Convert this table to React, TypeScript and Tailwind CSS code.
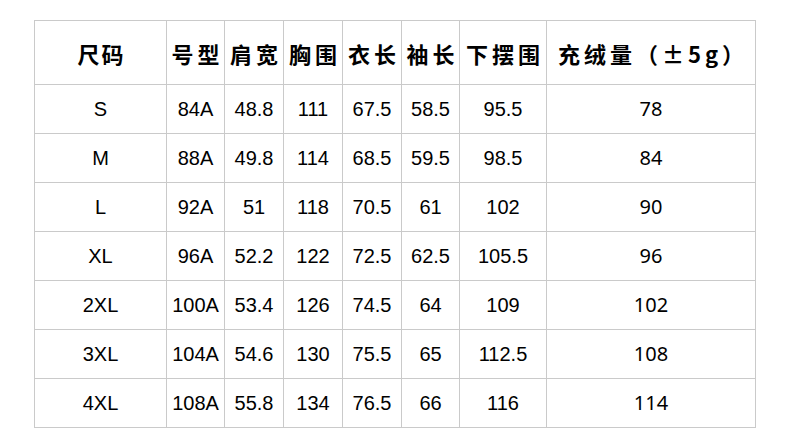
import React from "react";

const headers = ["尺码", "号型", "肩宽", "胸围", "衣长", "袖长", "下摆围", "充绒量（±5g）"];
const rows = [
  ["S", "84A", "48.8", "111", "67.5", "58.5", "95.5", "78"],
  ["M", "88A", "49.8", "114", "68.5", "59.5", "98.5", "84"],
  ["L", "92A", "51", "118", "70.5", "61", "102", "90"],
  ["XL", "96A", "52.2", "122", "72.5", "62.5", "105.5", "96"],
  ["2XL", "100A", "53.4", "126", "74.5", "64", "109", "102"],
  ["3XL", "104A", "54.6", "130", "75.5", "65", "112.5", "108"],
  ["4XL", "108A", "55.8", "134", "76.5", "66", "116", "114"],
];

export default function App() {
  return (
    <div className="w-[790px] h-[428px] bg-white pt-[20px] pl-[34px] overflow-hidden">
      <div className="w-[722px] bg-[#cacaca] p-px grid grid-cols-[131px_57px_58px_58px_58px_57px_86px_208px] grid-rows-[63px_repeat(7,48px)] gap-px">
        {headers.map((h, i) => (
          <div
            key={h}
            className={`bg-white flex items-center justify-center font-bold text-[22px] text-black pt-[1px] whitespace-nowrap ${i === 0 ? "tracking-[2px]" : "tracking-[4px]"}`}
            style={{ fontFamily: '"Noto Sans CJK SC", "Noto Sans", sans-serif' }}
          >
            <span className={`shrink-0 ${i === 0 ? "pl-[2px]" : "pl-[4px]"}`}>{h}</span>
          </div>
        ))}
        {rows.map((r) =>
          r.map((c, j) => (
            <div
              key={r[0] + j}
              className="bg-white flex items-center justify-center text-[20px] text-black whitespace-nowrap"
              style={{
                fontFamily: j === 7 ? '"Noto Sans", "Open Sans", sans-serif' : '"Liberation Sans", Arial, sans-serif',
              }}
            >
              {c}
            </div>
          ))
        )}
      </div>
    </div>
  );
}
